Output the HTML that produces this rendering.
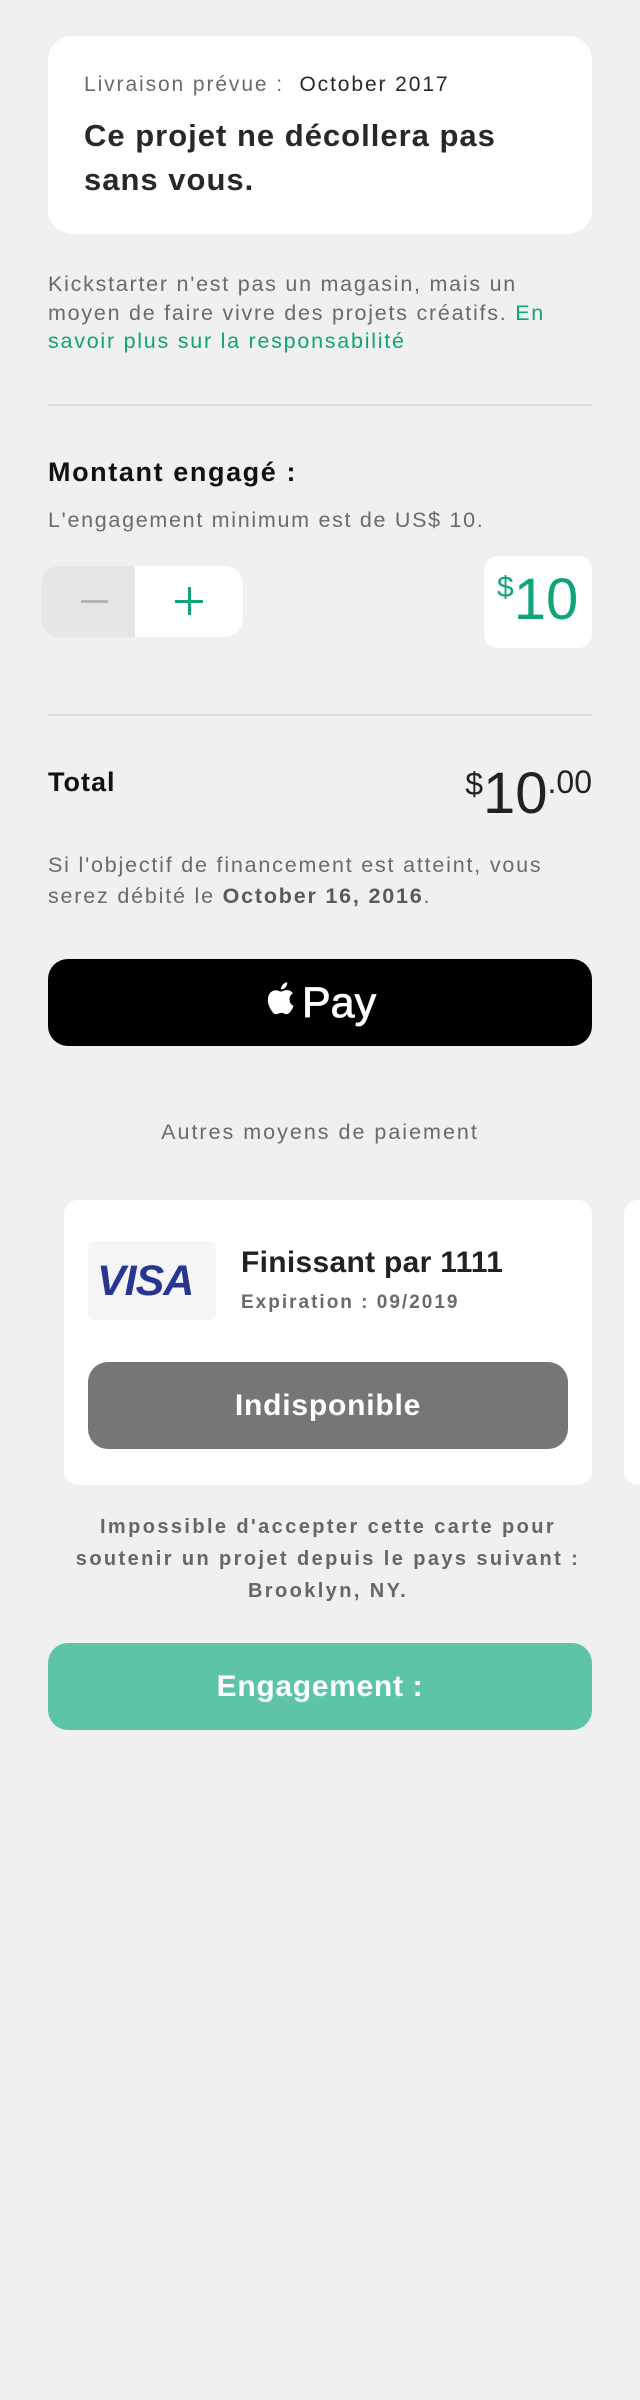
<!DOCTYPE html>
<html><head><meta charset="utf-8"><style>
*{margin:0;padding:0;box-sizing:border-box}
body{width:640px;height:2400px;background:#f0f0f0;font-family:"Liberation Sans",sans-serif;position:relative;overflow:hidden}
.a{position:absolute;white-space:nowrap}
</style></head><body>
<div class="a" style="left:48px;top:36px;width:544px;height:198px;background:#fff;border-radius:24px"></div>
<div class="a" style="left:84px;top:73px;font-size:21px;color:#6a6a6a;letter-spacing:1.9px">Livraison prévue :&nbsp; <span style="color:#282828">October 2017</span></div>
<div class="a" style="left:84px;top:114px;font-size:31px;font-weight:bold;color:#282828;line-height:44px;letter-spacing:1px">Ce projet ne décollera pas<br>sans vous.</div>
<div class="a" style="left:48px;top:270px;font-size:21.5px;color:#6a6a6a;line-height:28.5px;letter-spacing:1.75px">Kickstarter n'est pas un magasin, mais un<br>moyen de faire vivre des projets créatifs. <span style="color:#0fa47a">En</span><br><span style="color:#0fa47a">savoir plus sur la responsabilité</span></div>
<div class="a" style="left:48px;top:404px;width:544px;height:2px;background:#dcdcdc"></div>
<div class="a" style="left:48px;top:457px;font-size:27px;font-weight:bold;color:#111;letter-spacing:1.6px">Montant engagé :</div>
<div class="a" style="left:48px;top:508px;font-size:21.5px;color:#6a6a6a;letter-spacing:1.7px">L'engagement minimum est de US$ 10.</div>
<div class="a" style="left:41px;top:566px;width:202px;height:71px;background:#fff;border-radius:18px;overflow:hidden"><div style="width:94px;height:71px;background:#e6e6e6"></div></div>
<div class="a" style="left:81px;top:600px;width:27px;height:3px;background:#b5b5b5"></div>
<div class="a" style="left:175px;top:600px;width:28px;height:3px;background:#0fa47a"></div>
<div class="a" style="left:188px;top:587px;width:3px;height:28px;background:#0fa47a"></div>
<div class="a" style="left:484px;top:556px;width:108px;height:92px;background:#fff;border-radius:14px"></div>
<div class="a" style="left:497px;top:570px;color:#0fa47a;font-size:58px;line-height:60px"><span style="font-size:30px;vertical-align:top;line-height:36px">$</span>10</div>
<div class="a" style="left:48px;top:714px;width:544px;height:2px;background:#dcdcdc"></div>
<div class="a" style="left:48px;top:767px;font-size:27px;font-weight:bold;color:#111;letter-spacing:1px">Total</div>
<div class="a" style="right:48px;top:764px;color:#222;font-size:58px;line-height:60px"><span style="font-size:32px;vertical-align:top;line-height:40px">$</span>10<span style="font-size:32px;vertical-align:top;line-height:36px">.00</span></div>
<div class="a" style="left:48px;top:850px;font-size:21.5px;color:#6a6a6a;line-height:31px;letter-spacing:1.8px">Si l'objectif de financement est atteint, vous<br>serez débité le <b style="color:#5a5a5a">October 16, 2016</b>.</div>
<div class="a" style="left:48px;top:959px;width:544px;height:87px;background:#000;border-radius:20px"></div>
<svg class="a" style="left:265px;top:980px" width="30" height="36" viewBox="0 0 30 36"><path fill="#fff" d="M24.5 19.2c0-4 3.3-5.9 3.4-6-1.9-2.7-4.8-3.1-5.8-3.1-2.5-.3-4.8 1.4-6.1 1.4-1.3 0-3.2-1.4-5.2-1.3-2.7 0-5.2 1.6-6.6 4-2.8 4.9-.7 12.1 2 16 1.3 1.900 2.900 4.100 5 4 2-.1 2.800-1.300 5.200-1.300s3.100 1.300 5.200 1.300c2.200 0 3.500-2 4.800-3.900 1.500-2.200 2.100-4.300 2.200-4.400-.1 0-4.100-1.600-4.100-6.700zM20.600 7.300c1.100-1.300 1.800-3.200 1.600-5-1.600.1-3.500 1.100-4.600 2.400-1 1.100-1.900 3-1.700 4.800 1.800.1 3.600-.9 4.700-2.200z"/></svg>
<div class="a" style="left:302px;top:975px;font-size:43px;color:#fff;line-height:56px;-webkit-text-stroke:0.8px #fff">Pay</div>
<div class="a" style="left:0;width:640px;top:1120px;text-align:center;font-size:21.5px;color:#6a6a6a;letter-spacing:2px">Autres moyens de paiement</div>
<div class="a" style="left:64px;top:1200px;width:528px;height:285px;background:#fff;border-radius:14px"></div>
<div class="a" style="left:624px;top:1200px;width:40px;height:285px;background:#fff;border-radius:14px"></div>
<div class="a" style="left:88px;top:1241px;width:128px;height:79px;background:#f6f6f9;border-radius:6px"></div>
<div class="a" style="left:97px;top:1257px;font-size:43px;font-weight:bold;font-style:italic;color:#283593;letter-spacing:-1px;line-height:48px">VISA</div>
<div class="a" style="left:241px;top:1246px;font-size:30px;font-weight:bold;color:#222;letter-spacing:0.3px">Finissant par 1111</div>
<div class="a" style="left:241px;top:1292px;font-size:19px;font-weight:bold;color:#6a6a6a;letter-spacing:2px">Expiration : 09/2019</div>
<div class="a" style="left:88px;top:1362px;width:480px;height:87px;background:#767676;border-radius:20px;color:#fff;font-size:30px;font-weight:bold;text-align:center;line-height:87px;letter-spacing:0.8px">Indisponible</div>
<div class="a" style="left:0;width:656px;top:1511px;text-align:center;font-size:20px;font-weight:bold;color:#666;line-height:32px;letter-spacing:2.4px">Impossible d'accepter cette carte pour<br>soutenir un projet depuis le pays suivant :<br>Brooklyn, NY.</div>
<div class="a" style="left:48px;top:1643px;width:544px;height:87px;background:#5dc4a8;border-radius:20px;color:#fff;font-size:30px;font-weight:bold;text-align:center;line-height:87px;letter-spacing:0.7px">Engagement :</div>
</body></html>
